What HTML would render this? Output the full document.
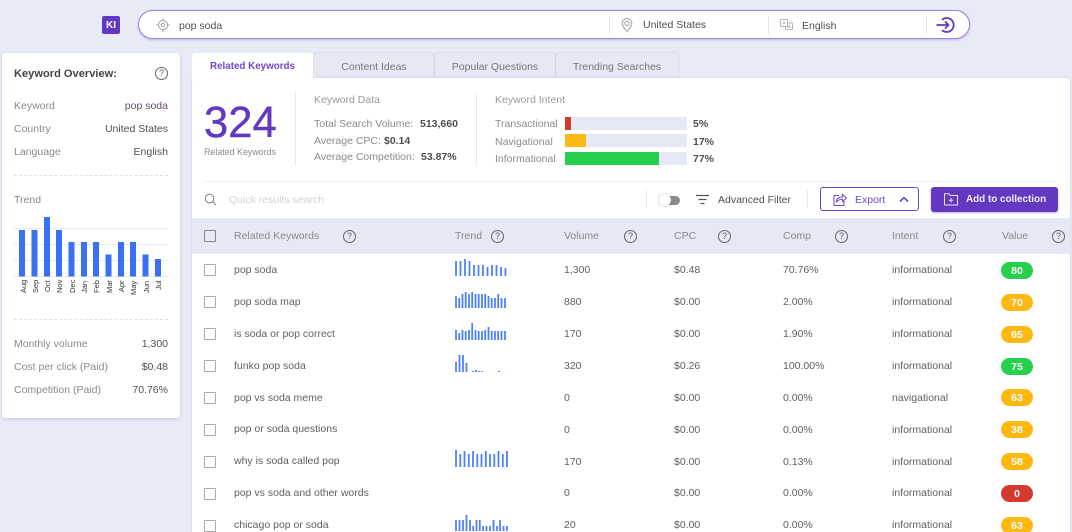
<!DOCTYPE html>
<html><head><meta charset="utf-8"><title>Keyword Research</title>
<style>
html,body{margin:0;padding:0;width:1072px;height:532px;overflow:hidden;background:#e8eaf6}
body{position:relative;font-family:"Liberation Sans",sans-serif;font-size:10.5px;color:#5f5f5f}
#w{position:absolute;left:0;top:0;width:1072px;height:532px;overflow:hidden;filter:blur(.3px)}
.a{position:absolute}
.t{position:absolute;line-height:16px;height:14px;white-space:nowrap}
.g{color:#8a8a8a}
.d{color:#4f4f4f}
.b{font-weight:bold}
.card{position:absolute;background:#fff;border-radius:3px}
.tab{position:absolute;top:53px;height:25px;background:#e6e8f5;border-radius:3px 3px 0 0;box-shadow:0 0 2px rgba(90,90,140,.25);text-align:center;line-height:29px;color:#777}
.h{position:absolute;width:11px;height:11px;border:1.2px solid #666;border-radius:50%;text-align:center;font-size:9px;line-height:11.500px;color:#666}
.cb{position:absolute;left:204px;width:10px;height:10px;border:1.3px solid #aaa;border-radius:1px;background:#fff}
.p{position:absolute;left:1001px;width:32px;height:17px;border-radius:9px;color:#fff;font-weight:bold;text-align:center;line-height:18px;font-size:10.5px}
.gr{background:#27cf4f}.or{background:#fdb913}.re{background:#d33a2c}
.bar{position:absolute;left:565px;width:122px;height:13px;background:#e6e8f5}
.bar b{display:block;height:13px}
svg{position:absolute;overflow:visible}
.m{position:absolute;left:0;top:0;font-size:7.5px;color:#333;transform-origin:0 0;white-space:nowrap}
</style></head><body><div id="w">

<div class="a" style="left:102px;top:16px;width:18px;height:18px;background:#6239c0;border-radius:2px;color:#fff;font-weight:bold;font-size:10px;line-height:19px;text-align:center">KI</div>

<div class="a" style="left:138px;top:10px;width:830px;height:27px;background:#fff;border:1.5px solid #9f83da;border-radius:15px;box-shadow:0 1px 2px rgba(98,57,192,.3)"></div>
<svg style="left:156px;top:18px" width="14" height="14" fill="none" stroke="#aaa" stroke-width="1.1"><circle cx="7" cy="7" r="4.6"/><circle cx="7" cy="7" r="1.8"/><path d="M7 0v2.4M7 11.6V14M0 7h2.4M11.6 7H14"/></svg>
<div class="t d" style="left:179px;top:18px">pop soda</div>
<div class="a" style="left:609px;top:16px;width:1px;height:18px;background:#e4e4e4"></div>
<svg style="left:621px;top:18px" width="12" height="14" fill="none" stroke="#aaa" stroke-width="1.1"><path d="M6 13.5C3 9.8 1.2 7.8 1.2 5.4a4.8 4.8 0 0 1 9.6 0C10.800 7.800 9 9.800 6 13.500z"/><circle cx="6" cy="5.400" r="2.200"/></svg>
<div class="t d" style="left:643px;top:17px">United States</div>
<div class="a" style="left:768px;top:16px;width:1px;height:18px;background:#e4e4e4"></div>
<svg style="left:780px;top:19px" width="13" height="12" fill="none" stroke="#b5b5b5" stroke-width="1"><rect x=".5" y=".5" width="7" height="7" rx="1"/><path d="M8 4h4a.6.6 0 0 1 .5.600V10a.6.6 0 0 1-.5.600H5.500V8"/><path d="M2.500 4h3M4 2.500v3M8 9l1.300-2.500L10.500 9"/></svg>
<div class="t d" style="left:802px;top:18px">English</div>
<div class="a" style="left:926px;top:16px;width:1px;height:18px;background:#e4e4e4"></div>
<svg style="left:936px;top:16px" width="20" height="18" fill="none" stroke="#6239c0" stroke-width="1.800"><path d="M6 3.800a7 7 0 1 1 0 10.400"/><path d="M.5 9h12M9 5.500 12.500 9 9 12.500"/></svg>

<!-- Sidebar -->
<div class="card" style="left:2px;top:53px;width:178px;height:365px;box-shadow:0 1px 3px rgba(90,90,140,.25)"></div>
<div class="t b" style="left:14px;top:66px;font-size:11.100px;color:#444">Keyword Overview:</div>
<div class="h" style="left:155px;top:67px">?</div>
<div class="t g" style="left:14px;top:98px">Keyword</div>
<div class="t" style="right:904px;top:98px;color:#6a4a6a">pop soda</div>
<div class="t g" style="left:14px;top:121px">Country</div>
<div class="t d" style="right:904px;top:121px">United States</div>
<div class="t g" style="left:14px;top:144px">Language</div>
<div class="t d" style="right:904px;top:144px">English</div>
<div class="a" style="left:14px;top:175px;width:154px;border-top:1px dashed #e2e2e2"></div>
<div class="t g" style="left:14px;top:192px">Trend</div>
<svg style="left:0;top:0" width="190" height="300">
<path d="M14 228.500h154M14 244.500h154M14 260.500h154M14 276.500h154" stroke="#e9e9e9" stroke-width="1"/>
<g fill="#3a70f5">
<rect x="19" y="230" width="6" height="46.500"/><rect x="31.500" y="230" width="6" height="46.500"/><rect x="44" y="217" width="6" height="59.500"/><rect x="56" y="230" width="6" height="46.500"/><rect x="68.500" y="242" width="6" height="34.500"/><rect x="81" y="242" width="6" height="34.500"/><rect x="93" y="242" width="6" height="34.500"/><rect x="105.500" y="254.500" width="6" height="22"/><rect x="118" y="242" width="6" height="34.500"/><rect x="130" y="242" width="6" height="34.500"/><rect x="142.500" y="254.500" width="6" height="22"/><rect x="155" y="259" width="6" height="17.500"/>
</g></svg>
<span class="m" style="transform:translate(19px,293px) rotate(-90deg)">Aug</span>
<span class="m" style="transform:translate(31px,293px) rotate(-90deg)">Sep</span>
<span class="m" style="transform:translate(43px,292px) rotate(-90deg)">Oct</span>
<span class="m" style="transform:translate(55px,293px) rotate(-90deg)">Nov</span>
<span class="m" style="transform:translate(68px,293px) rotate(-90deg)">Dec</span>
<span class="m" style="transform:translate(80px,293px) rotate(-90deg)">Jan</span>
<span class="m" style="transform:translate(92px,293px) rotate(-90deg)">Feb</span>
<span class="m" style="transform:translate(105px,293px) rotate(-90deg)">Mar</span>
<span class="m" style="transform:translate(117px,292px) rotate(-90deg)">Apr</span>
<span class="m" style="transform:translate(129px,295px) rotate(-90deg)">May</span>
<span class="m" style="transform:translate(142px,293px) rotate(-90deg)">Jun</span>
<span class="m" style="transform:translate(154px,290px) rotate(-90deg)">Jul</span>
<div class="a" style="left:14px;top:319px;width:154px;border-top:1px dashed #e2e2e2"></div>
<div class="t g" style="left:14px;top:336px">Monthly volume</div>
<div class="t d" style="right:904px;top:336px">1,300</div>
<div class="t g" style="left:14px;top:359px">Cost per click (Paid)</div>
<div class="t d" style="right:904px;top:359px">$0.48</div>
<div class="t g" style="left:14px;top:382px">Competition (Paid)</div>
<div class="t d" style="right:904px;top:382px">70.76%</div>

<!-- Tabs -->
<div class="tab" style="left:314px;width:120px">Content Ideas</div>
<div class="tab" style="left:435px;width:120px">Popular Questions</div>
<div class="tab" style="left:556px;width:122px">Trending Searches</div>
<div class="card" style="left:192px;top:78px;width:878px;height:460px;box-shadow:0 0 2px rgba(90,90,140,.2)"></div>
<div class="a" style="left:192px;top:53px;width:121px;height:27px;background:#fff;border-radius:3px 3px 0 0;text-align:center;line-height:27px;color:#6f47c9;font-weight:bold;font-size:9.800px">Related Keywords</div>

<!-- Summary -->
<div class="t" style="left:204px;top:98px;height:50px;line-height:50px;font-size:43.600px;color:#6239c0;-webkit-text-stroke:.4px #6239c0">324</div>
<div class="t g" style="left:204px;top:144px;font-size:8.900px">Related Keywords</div>
<div class="a" style="left:295px;top:93px;width:1px;height:73px;background:#e8e8e8"></div>
<div class="t" style="left:314px;top:92px;color:#999">Keyword Data</div>
<div class="t g" style="left:314px;top:116px">Total Search Volume:</div>
<div class="t b d" style="left:420px;top:116px">513,660</div>
<div class="t g" style="left:314px;top:133px">Average CPC:</div>
<div class="t b d" style="left:384px;top:133px">$0.14</div>
<div class="t g" style="left:314px;top:149px">Average Competition:</div>
<div class="t b d" style="left:421px;top:149px">53.87%</div>
<div class="a" style="left:476px;top:93px;width:1px;height:73px;background:#e8e8e8"></div>
<div class="t" style="left:495px;top:92px;color:#999">Keyword Intent</div>
<div class="t g" style="left:495px;top:116px">Transactional</div>
<div class="bar" style="top:117px"><b class="re" style="width:6px"></b></div>
<div class="t b d" style="left:693px;top:116px">5%</div>
<div class="t g" style="left:495px;top:134px">Navigational</div>
<div class="bar" style="top:134px"><b class="or" style="width:21px"></b></div>
<div class="t b d" style="left:693px;top:134px">17%</div>
<div class="t g" style="left:495px;top:151px">Informational</div>
<div class="bar" style="top:152px"><b class="gr" style="width:94px"></b></div>
<div class="t b d" style="left:693px;top:151px">77%</div>

<div class="a" style="left:204px;top:181px;width:854px;height:1px;background:#efefef"></div>

<!-- Toolbar -->
<svg style="left:204px;top:193px" width="13" height="13" fill="none" stroke="#888" stroke-width="1.100"><circle cx="5.500" cy="5.500" r="4.300"/><path d="M8.700 8.700 12 12"/></svg>
<div class="t" style="left:229px;top:192px;color:#d2d2d2">Quick results search</div>
<div class="a" style="left:646px;top:190px;width:1px;height:18px;background:#e8e8e8"></div>
<div class="a" style="left:660px;top:196px;width:20px;height:9px;background:#8a8a8a;border-radius:5px"></div>
<div class="a" style="left:659px;top:194px;width:12px;height:12px;background:#fff;border-radius:50%;box-shadow:0 0 2px rgba(0,0,0,.3)"></div>
<svg style="left:696px;top:194px" width="13" height="11" stroke="#555" stroke-width="1.200"><path d="M0 1.500h13M2.500 5.500h8M4.500 9.500h4"/></svg>
<div class="t d" style="left:718px;top:192px">Advanced Filter</div>
<div class="a" style="left:807px;top:190px;width:1px;height:18px;background:#e8e8e8"></div>
<div class="a" style="left:820px;top:187px;width:97px;height:22px;border:1.500px solid #6f47c9;border-radius:3px;background:#fff"></div>
<svg style="left:833px;top:193px" width="14" height="14" fill="none" stroke="#6f47c9" stroke-width="1"><path d="M6 2.500H1v10h10V8"/><path d="M3.500 9c0-3.500 2.500-5 6-5V1.500l4 3.500-4 3.500V6.200c-2.500 0-4.500.8-6 2.800z"/></svg>
<div class="t" style="left:855px;top:192px;color:#6f47c9">Export</div>
<svg style="left:899px;top:196px" width="10" height="7" fill="none" stroke="#6f47c9" stroke-width="1.600"><path d="M1 5.500 5 1.500 9 5.500"/></svg>
<div class="a" style="left:931px;top:187px;width:127px;height:25px;background:#6239c0;border-radius:3px;box-shadow:0 1px 2px rgba(98,57,192,.4)"></div>
<svg style="left:944px;top:193px" width="14" height="13" fill="none" stroke="#e8e2f7" stroke-width="1"><path d="M.5 12V.8h4.500l1.300 1.700h7.200V12z"/><path d="M7 5v4.500M4.800 7.200h4.400"/></svg>
<div class="t b" style="left:966px;top:192px;color:#f0ecfa;font-size:9.900px">Add to collection</div>

<!-- Table header -->
<div class="a" style="left:192px;top:218px;width:878px;height:36px;background:#e6e8f5"></div>
<div class="cb" style="top:230px;background:transparent;border-color:#888"></div>
<div class="t g" style="left:234px;top:228px">Related Keywords</div><div class="h" style="left:343px;top:230px">?</div>
<div class="t g" style="left:455px;top:228px">Trend</div><div class="h" style="left:491px;top:230px">?</div>
<div class="t g" style="left:564px;top:228px">Volume</div><div class="h" style="left:624px;top:230px">?</div>
<div class="t g" style="left:674px;top:228px">CPC</div><div class="h" style="left:718px;top:230px">?</div>
<div class="t g" style="left:783px;top:228px">Comp</div><div class="h" style="left:835px;top:230px">?</div>
<div class="t g" style="left:892px;top:228px">Intent</div><div class="h" style="left:943px;top:230px">?</div>
<div class="t g" style="left:1002px;top:228px">Value</div><div class="h" style="left:1052px;top:230px">?</div>

<!-- Rows -->
<div class="cb" style="top:264px"></div><div class="t" style="left:234px;top:262px">pop soda</div><div class="t" style="left:564px;top:262px">1,300</div><div class="t" style="left:674px;top:262px">$0.48</div><div class="t" style="left:783px;top:262px">70.76%</div><div class="t" style="left:892px;top:262px">informational</div><div class="p gr" style="top:262px">80</div>
<div class="cb" style="top:296px"></div><div class="t" style="left:234px;top:294px">pop soda map</div><div class="t" style="left:564px;top:294px">880</div><div class="t" style="left:674px;top:294px">$0.00</div><div class="t" style="left:783px;top:294px">2.00%</div><div class="t" style="left:892px;top:294px">informational</div><div class="p or" style="top:294px">70</div>
<div class="cb" style="top:328px"></div><div class="t" style="left:234px;top:326px">is soda or pop correct</div><div class="t" style="left:564px;top:326px">170</div><div class="t" style="left:674px;top:326px">$0.00</div><div class="t" style="left:783px;top:326px">1.90%</div><div class="t" style="left:892px;top:326px">informational</div><div class="p or" style="top:326px">65</div>
<div class="cb" style="top:360px"></div><div class="t" style="left:234px;top:358px">funko pop soda</div><div class="t" style="left:564px;top:358px">320</div><div class="t" style="left:674px;top:358px">$0.26</div><div class="t" style="left:783px;top:358px">100.00%</div><div class="t" style="left:892px;top:358px">informational</div><div class="p gr" style="top:358px">75</div>
<div class="cb" style="top:392px"></div><div class="t" style="left:234px;top:390px">pop vs soda meme</div><div class="t" style="left:564px;top:390px">0</div><div class="t" style="left:674px;top:390px">$0.00</div><div class="t" style="left:783px;top:390px">0.00%</div><div class="t" style="left:892px;top:390px">navigational</div><div class="p or" style="top:389px">63</div>
<div class="cb" style="top:424px"></div><div class="t" style="left:234px;top:421px">pop or soda questions</div><div class="t" style="left:564px;top:422px">0</div><div class="t" style="left:674px;top:422px">$0.00</div><div class="t" style="left:783px;top:422px">0.00%</div><div class="t" style="left:892px;top:422px">informational</div><div class="p or" style="top:421px">38</div>
<div class="cb" style="top:456px"></div><div class="t" style="left:234px;top:453px">why is soda called pop</div><div class="t" style="left:564px;top:454px">170</div><div class="t" style="left:674px;top:454px">$0.00</div><div class="t" style="left:783px;top:454px">0.13%</div><div class="t" style="left:892px;top:454px">informational</div><div class="p or" style="top:453px">58</div>
<div class="cb" style="top:488px"></div><div class="t" style="left:234px;top:485px">pop vs soda and other words</div><div class="t" style="left:564px;top:485px">0</div><div class="t" style="left:674px;top:485px">$0.00</div><div class="t" style="left:783px;top:485px">0.00%</div><div class="t" style="left:892px;top:485px">informational</div><div class="p re" style="top:485px">0</div>
<div class="cb" style="top:520px"></div><div class="t" style="left:234px;top:517px">chicago pop or soda</div><div class="t" style="left:564px;top:517px">20</div><div class="t" style="left:674px;top:517px">$0.00</div><div class="t" style="left:783px;top:517px">0.00%</div><div class="t" style="left:892px;top:517px">informational</div><div class="p or" style="top:517px">63</div>

<!-- Sparklines -->
<svg style="left:0;top:0" width="1072" height="532" fill="none" stroke="#4d82f7" stroke-width="1.800">
<path d="M456 276v-15M460.500 276v-15M465 276v-17M469.500 276v-15M474 276v-11M478.500 276v-11M483 276v-11M487.500 276v-9M492 276v-11M496.500 276v-11M501 276v-9M505.500 276v-8"/>
<path d="M456 308v-12M459.200 308v-10M462.500 308v-14M465.700 308v-16M469 308v-14M472.200 308v-16M475.500 308v-14M478.700 308v-14M482 308v-14M485.200 308v-14M488.500 308v-12M491.700 308v-10M495 308v-10M498.200 308v-14M501.500 308v-10M505 308v-10"/>
<path d="M456 340v-10M459.200 340v-7M462.500 340v-10M465.700 340v-9M469 340v-10M472.200 340v-17M475.500 340v-10M478.700 340v-9M482 340v-9M485.200 340v-10M488.500 340v-13M491.700 340v-9M495 340v-9M498.200 340v-9M501.500 340v-9M505 340v-9"/>
<path d="M456 372v-10M459.500 372v-17M463 372v-17M466.500 372v-9M473 372v-1M476 372v-2M479 372v-1M482 372v-1M499 372v-1"/>
<path d="M456 467v-17M460.300 467v-13M464.500 467v-16M468.800 467v-13M473 467v-16M477.300 467v-13M481.500 467v-13M485.800 467v-16M490 467v-13M494.300 467v-13M498.500 467v-16M502.800 467v-13M507 467v-16"/>
<path d="M456 531v-11M459.500 531v-11M463 531v-11M466.500 531v-16M470 531v-11M473.200 531v-5M476.500 531v-11M479.800 531v-11M483 531v-5M486.500 531v-5M490 531v-5M493.500 531v-11M497 531v-5M500 531v-11M503.500 531v-5M507 531v-5"/>
</svg>

</div></body></html>
